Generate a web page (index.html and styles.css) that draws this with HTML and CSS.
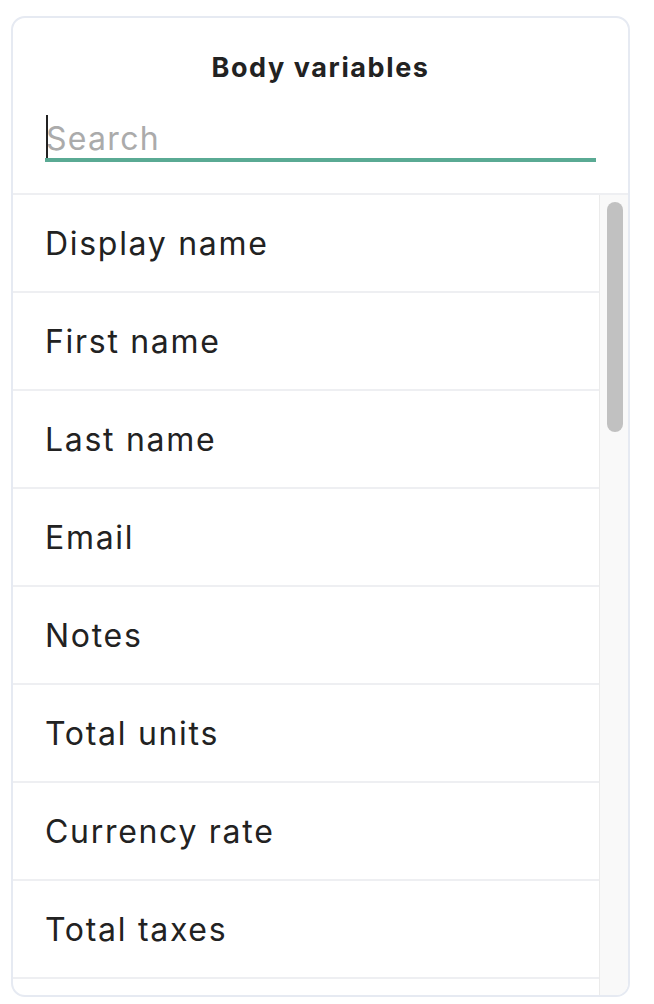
FILE: index.html
```html
<!DOCTYPE html>
<html lang="en">
<head>
<meta charset="utf-8">
<title>Body variables</title>
<link rel="stylesheet" href="styles.css">
</head>
<body>
<div class="card">
  <div class="header">
    <h2 class="title">Body variables</h2>
    <div class="search">
      <span class="caret"></span>
      <input class="search-input" type="text" placeholder="Search">
    </div>
  </div>
  <div class="list">
    <ul class="rows">
      <li class="row">Display name</li>
      <li class="row">First name</li>
      <li class="row">Last name</li>
      <li class="row">Email</li>
      <li class="row">Notes</li>
      <li class="row">Total units</li>
      <li class="row">Currency rate</li>
      <li class="row">Total taxes</li>
      <li class="row"></li>
    </ul>
    <div class="track"><div class="thumb"></div></div>
  </div>
</div>
</body>
</html>
```
FILE: styles.css
```css
html, body {
  margin: 0;
  padding: 0;
  background: #ffffff;
}
body {
  font-family: Inter, "Noto Sans", sans-serif;
  color: #222222;
}
.card {
  box-sizing: border-box;
  margin: 16px 0 0 11px;
  width: 619px;
  height: 981px;
  border: 2px solid #e6eaf2;
  border-radius: 14px;
  background: #ffffff;
  overflow: hidden;
  display: flex;
  flex-direction: column;
}
.header {
  padding: 34px 32px 31px 32px;
  border-bottom: 2px solid #eeeff2;
  display: flex;
  flex-direction: column;
  gap: 34px;
}
.title {
  margin: 0;
  text-align: center;
  font-size: 27px;
  line-height: 32px;
  font-weight: 700;
  letter-spacing: 1.6px;
  color: #222222;
}
.search {
  position: relative;
}
.caret {
  position: absolute;
  left: 1px;
  top: -3px;
  width: 2px;
  height: 43px;
  background: #222222;
}
.search-input {
  display: block;
  box-sizing: content-box;
  width: 550px;
  height: 40px;
  margin: 0;
  padding: 0 0 0 1px;
  border: none;
  border-bottom: 4px solid #5aaa94;
  outline: none;
  font-family: Inter, "Noto Sans", sans-serif;
  font-size: 32px;
  letter-spacing: 1.3px;
  color: #222222;
  background: transparent;
}
.search-input::placeholder {
  color: #ababab;
}
.list {
  flex: 1;
  min-height: 0;
  display: flex;
}
.rows {
  flex: 1;
  margin: 0;
  padding: 0;
  list-style: none;
  overflow: hidden;
}
.row {
  height: 96px;
  line-height: 98px;
  padding-left: 32px;
  border-bottom: 2px solid #eeeff2;
  font-size: 32px;
  letter-spacing: 1.7px;
  color: #222222;
}
.track {
  width: 29px;
  box-sizing: border-box;
  padding: 7px 0 0 7px;
  background: #f9f9f9;
  border-left: 1px solid #ebebeb;
}
.thumb {
  width: 16px;
  height: 230px;
  border-radius: 8px;
  background: #c1c1c1;
}
```
